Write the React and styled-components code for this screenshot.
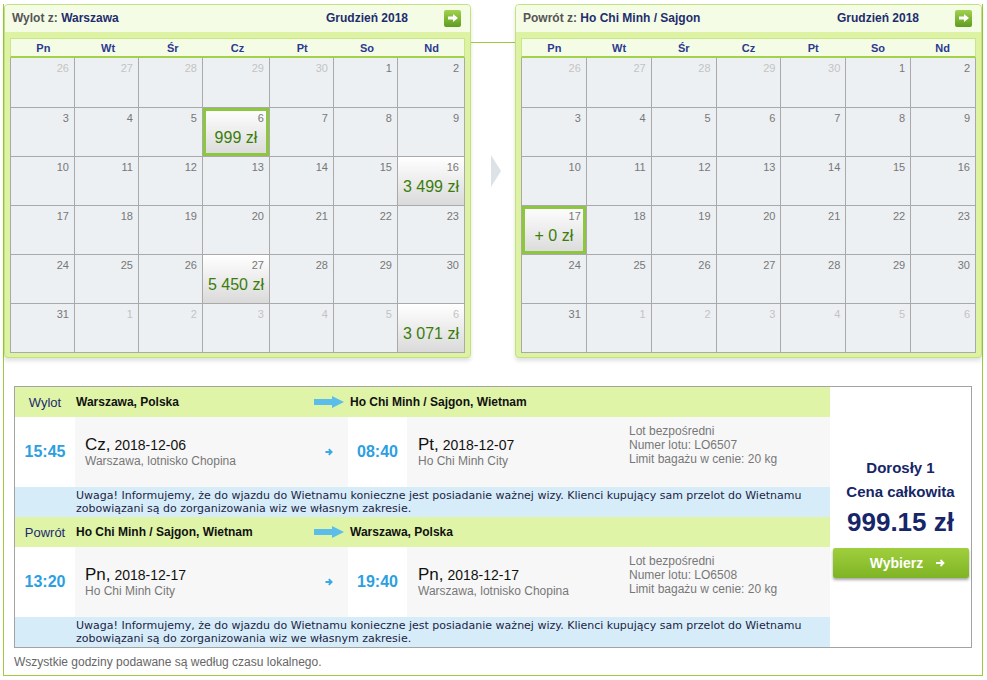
import React from "react"
import styled, { createGlobalStyle, css } from "styled-components"

const GlobalStyle = createGlobalStyle`
  body {
    margin: 0;
    background: #fff;
    font-family: 'Liberation Sans', Arial, sans-serif;
  }
`

const Frame = styled.div`
  width: 978px;
  margin: 4px 0 0 3px;
  border: 1px solid #9dca3f;
  border-top: none;
`

const Calendars = styled.div`
  display: flex;
`

const Connector = styled.div`
  width: 44px;
  display: flex;
  flex-direction: column;
`

const ConnectorLine = styled.div`
  margin-top: 38px;
  height: 1px;
  background: #9dca3f;
`

const NextMarker = styled.div`
  margin: 112px 0 0 20px;
  width: 0;
  height: 0;
  border-left: 10px solid #dde2e7;
  border-top: 16px solid transparent;
  border-bottom: 16px solid transparent;
`

const CalBox = styled.div`
  width: 467px;
  box-sizing: border-box;
  border: 1px solid #c3e27c;
  border-radius: 4px;
  background: #ddf3a3;
  box-shadow: 0 3px 4px rgba(0, 0, 0, 0.12);
  overflow: hidden;
`

const CalHeader = styled.div`
  height: 27px;
  display: flex;
  align-items: center;
  padding: 0 9px 1px 7px;
  box-sizing: border-box;
  background: #f5fce6;
  font-size: 12px;
  font-weight: bold;
`

const CalTitle = styled.div`
  flex: 1;
  color: #555;
  span {
    color: #1f2d6e;
  }
`

const Month = styled.div`
  color: #1f2d6e;
  margin-right: 36px;
`

const NextButton = styled.button`
  width: 17px;
  height: 17px;
  padding: 0;
  border: none;
  border-radius: 2px;
  background: linear-gradient(#a2d24e, #5f9c1f);
  display: flex;
  align-items: center;
  justify-content: center;
`

const CalBody = styled.div`
  padding: 6px 5px 4px;
`

const Weekdays = styled.div`
  display: grid;
  grid-template-columns: repeat(7, 1fr);
  height: 17px;
  align-items: center;
  background: #f5fce6;
  border: 1px solid #c8e68a;
  border-bottom: 2px solid #a3d149;
  font-size: 11px;
  font-weight: bold;
  color: #2b3990;
  text-align: center;
`

const Days = styled.div`
  display: grid;
  grid-template-columns: repeat(7, 1fr);
  grid-template-rows: 49px repeat(5, 48px);
  gap: 1px;
  padding: 0 1px 1px;
  background: #a9a9a9;
`

const Day = styled.div`
  padding: 4px 5px 0;
  background: ${p => (p.$price ? "linear-gradient(#ffffff, #dadada)" : "#edf0f3")};
  box-shadow: ${p => (p.$selected ? "inset 0 0 0 3px #8dc63f" : "none")};
  font-size: 11px;
  color: ${p => (p.$other ? "#c3c3c3" : "#777")};
`

const DayNum = styled.div`
  text-align: right;
  line-height: 13px;
`

const Price = styled.div`
  margin-top: 4px;
  text-align: center;
  font-size: 16px;
  color: #3b7d0c;
  white-space: nowrap;
`

const Panel = styled.div`
  display: flex;
  margin: 28px 10px 0;
  border: 1px solid #a3a3a3;
`

const Trips = styled.div`
  width: 815px;
`

const cols = css`
  display: grid;
  grid-template-columns: 60px 235px 38px 59px 222px 201px;
`

const RouteRow = styled.div`
  ${cols}
  height: 30px;
  align-items: center;
  background: #dff4a6;
  font-size: 12px;
  font-weight: bold;
  color: #111;
`

const RouteLabel = styled.div`
  text-align: center;
  font-size: 13px;
  font-weight: normal;
  color: #1c2a70;
`

const RoutePlace = styled.div`
  padding-left: ${p => p.$pad || 1}px;
  grid-column: ${p => p.$span || "auto"};
`

const Centered = styled.div`
  display: flex;
  justify-content: center;
  align-items: center;
`

const DetailRow = styled.div`
  ${cols}
  height: 70px;
`

const Cell = styled.div`
  display: flex;
  align-items: center;
  justify-content: ${p => (p.$center ? "center" : "flex-start")};
  padding-left: ${p => p.$pad || 0}px;
  background: ${p => (p.$white ? "#fff" : "#f7f7f7")};
`

const Time = styled.div`
  font-size: 16px;
  font-weight: bold;
  color: #2d9fe0;
`

const DateLine = styled.div`
  font-size: 14px;
  color: #111;
  line-height: 18px;
  b {
    font-weight: normal;
    font-size: 17px;
  }
`

const Place = styled.div`
  font-size: 12px;
  color: #777;
  line-height: 15px;
`

const Info = styled.div`
  padding-bottom: 14px;
  font-size: 12px;
  line-height: 14px;
  color: #777;
`

const Notice = styled.div`
  height: 30px;
  box-sizing: border-box;
  padding: 2px 0 0 61px;
  background: #d6edf9;
  font-family: 'DejaVu Sans', Verdana, sans-serif;
  font-size: 11px;
  line-height: 13px;
  color: #1d1d45;
  white-space: nowrap;
`

const Summary = styled.div`
  flex: 1;
  display: flex;
  flex-direction: column;
  align-items: center;
  justify-content: center;
  color: #162668;
  font-weight: bold;
`

const SummaryLine = styled.div`
  font-size: 15px;
  line-height: 24px;
`

const Total = styled.div`
  font-size: 26px;
  line-height: 36px;
`

const ChooseButton = styled.button`
  margin-top: 8px;
  width: 136px;
  height: 30px;
  border: none;
  border-radius: 2px;
  padding: 0 0 0 14px;
  background: linear-gradient(#a0cf3d, #7fb424);
  box-shadow: 0 2px 3px rgba(0, 0, 0, 0.35);
  display: flex;
  align-items: center;
  justify-content: center;
  gap: 13px;
  font-family: 'Liberation Sans', Arial, sans-serif;
  font-size: 14px;
  font-weight: bold;
  color: #fff;
`

const Footer = styled.div`
  padding: 7px 10px 6px;
  font-size: 12px;
  line-height: 14px;
  color: #666;
`

const GreenArrow = () => (
  <svg width="10" height="8" viewBox="0 0 10 8">
    <path d="M0 2.5h5V0l5 4-5 4V5.5H0z" fill="#fff" />
  </svg>
)

const BigArrow = () => (
  <svg width="30" height="12" viewBox="0 0 30 12">
    <path d="M0 3h18V0l12 6-12 6V9H0z" fill="#5bbde9" />
  </svg>
)

const SmallArrow = () => (
  <svg width="8" height="8" viewBox="0 0 8 8">
    <path d="M0.5 4h6M3.8 1.2l2.8 2.8-2.8 2.8" stroke="#3aa8e5" strokeWidth="1.8" fill="none" />
  </svg>
)

const WhiteArrow = () => (
  <svg width="9" height="8" viewBox="0 0 9 8">
    <path d="M0 4h7M4.5 1l3 3-3 3" stroke="#fff" strokeWidth="1.8" fill="none" />
  </svg>
)

const WEEKDAYS = ["Pn", "Wt", "Śr", "Cz", "Pt", "So", "Nd"]

const buildDays = () => {
  const days = [26, 27, 28, 29, 30].map(n => ({ n, other: true }))
  for (let n = 1; n <= 31; n++) days.push({ n })
  for (let n = 1; n <= 6; n++) days.push({ n, other: true })
  return days
}

const Calendar = ({ label, city, prices }) => {
  const days = buildDays()
  return (
    <CalBox>
      <CalHeader>
        <CalTitle>
          {label} <span>{city}</span>
        </CalTitle>
        <Month>Grudzień 2018</Month>
        <NextButton>
          <GreenArrow />
        </NextButton>
      </CalHeader>
      <CalBody>
        <Weekdays>
          {WEEKDAYS.map(d => (
            <div key={d}>{d}</div>
          ))}
        </Weekdays>
        <Days>
          {days.map((d, i) => {
            const p = prices[i]
            return (
              <Day key={i} $other={d.other} $price={!!p} $selected={p && p.selected}>
                <DayNum>{d.n}</DayNum>
                {p && <Price>{p.text}</Price>}
              </Day>
            )
          })}
        </Days>
      </CalBody>
    </CalBox>
  )
}

const NOTICE_1 =
  "Uwaga! Informujemy, że do wjazdu do Wietnamu konieczne jest posiadanie ważnej wizy. Klienci kupujący sam przelot do Wietnamu"
const NOTICE_2 = "zobowiązani są do zorganizowania wiz we własnym zakresie."

const Leg = ({ label, from, to, dep, arr, flight }) => (
  <>
    <RouteRow>
      <RouteLabel>{label}</RouteLabel>
      <RoutePlace>{from}</RoutePlace>
      <Centered>
        <BigArrow />
      </Centered>
      <RoutePlace $pad={2} $span="4 / 7">
        {to}
      </RoutePlace>
    </RouteRow>
    <DetailRow>
      <Cell $white $center>
        <Time>{dep.time}</Time>
      </Cell>
      <Cell $pad={10}>
        <div>
          <DateLine>
            <b>{dep.day},</b> {dep.date}
          </DateLine>
          <Place>{dep.place}</Place>
        </div>
      </Cell>
      <Cell $center>
        <SmallArrow />
      </Cell>
      <Cell $white $center>
        <Time>{arr.time}</Time>
      </Cell>
      <Cell $pad={11}>
        <div>
          <DateLine>
            <b>{arr.day},</b> {arr.date}
          </DateLine>
          <Place>{arr.place}</Place>
        </div>
      </Cell>
      <Cell>
        <Info>
          Lot bezpośredni
          <br />
          Numer lotu: {flight}
          <br />
          Limit bagażu w cenie: 20 kg
        </Info>
      </Cell>
    </DetailRow>
    <Notice>
      {NOTICE_1}
      <br />
      {NOTICE_2}
    </Notice>
  </>
)

export default function App() {
  return (
    <>
      <GlobalStyle />
      <Frame>
        <Calendars>
          <Calendar
            label="Wylot z:"
            city="Warszawa"
            prices={{
              10: { text: "999 zł", selected: true },
              20: { text: "3 499 zł" },
              31: { text: "5 450 zł" },
              41: { text: "3 071 zł" },
            }}
          />
          <Connector>
            <ConnectorLine />
            <NextMarker />
          </Connector>
          <Calendar
            label="Powrót z:"
            city="Ho Chi Minh / Sajgon"
            prices={{ 21: { text: "+ 0 zł", selected: true } }}
          />
        </Calendars>
        <Panel>
          <Trips>
            <Leg
              label="Wylot"
              from="Warszawa, Polska"
              to="Ho Chi Minh / Sajgon, Wietnam"
              dep={{ time: "15:45", day: "Cz", date: "2018-12-06", place: "Warszawa, lotnisko Chopina" }}
              arr={{ time: "08:40", day: "Pt", date: "2018-12-07", place: "Ho Chi Minh City" }}
              flight="LO6507"
            />
            <Leg
              label="Powrót"
              from="Ho Chi Minh / Sajgon, Wietnam"
              to="Warszawa, Polska"
              dep={{ time: "13:20", day: "Pn", date: "2018-12-17", place: "Ho Chi Minh City" }}
              arr={{ time: "19:40", day: "Pn", date: "2018-12-17", place: "Warszawa, lotnisko Chopina" }}
              flight="LO6508"
            />
          </Trips>
          <Summary>
            <SummaryLine>Dorosły 1</SummaryLine>
            <SummaryLine>Cena całkowita</SummaryLine>
            <Total>999.15 zł</Total>
            <ChooseButton>
              Wybierz
              <WhiteArrow />
            </ChooseButton>
          </Summary>
        </Panel>
        <Footer>Wszystkie godziny podawane są według czasu lokalnego.</Footer>
      </Frame>
    </>
  )
}
